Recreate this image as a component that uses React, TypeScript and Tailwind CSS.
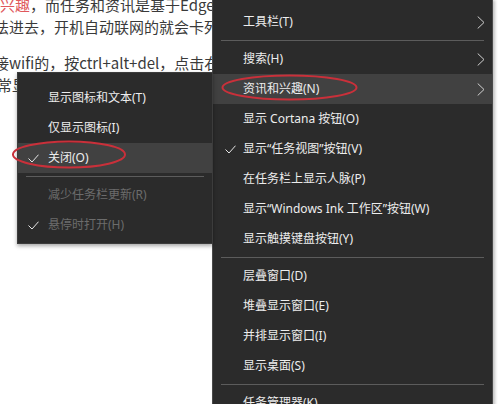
import type { ReactNode } from 'react';

type Item = { label: string; checked?: boolean; disabled?: boolean; active?: boolean; sub?: boolean } | 'sep';

const MAIN: Item[] = [
  { label: '工具栏(T)', sub: true },
  'sep',
  { label: '搜索(H)', sub: true },
  { label: '资讯和兴趣(N)', sub: true, active: true },
  { label: '显示 Cortana 按钮(O)' },
  { label: '显示“任务视图”按钮(V)', checked: true },
  { label: '在任务栏上显示人脉(P)' },
  { label: '显示“Windows Ink 工作区”按钮(W)' },
  { label: '显示触摸键盘按钮(Y)' },
  'sep',
  { label: '层叠窗口(D)' },
  { label: '堆叠显示窗口(E)' },
  { label: '并排显示窗口(I)' },
  { label: '显示桌面(S)' },
  'sep',
  { label: '任务管理器(K)' },
];

const SUB: Item[] = [
  { label: '显示图标和文本(T)' },
  { label: '仅显示图标(I)' },
  { label: '关闭(O)', checked: true, active: true },
  'sep',
  { label: '减少任务栏更新(R)', disabled: true },
  { label: '悬停时打开(H)', checked: true, disabled: true },
];

function Check() {
  return (
    <svg width="11" height="9" viewBox="0 0 11 9" fill="none">
      <polyline points="0.5,4.5 4,8 10.5,0.7" stroke="#e6e6e6" strokeWidth="1" />
    </svg>
  );
}

function Chevron() {
  return (
    <svg width="8" height="13" viewBox="0 0 8 13" fill="none">
      <polyline points="0.7,0.5 7,6.5 0.7,12.5" stroke="#d0d0d0" strokeWidth="1" />
    </svg>
  );
}

function MenuRows({ items, checkPad }: { items: Item[]; checkPad: string }): ReactNode {
  return items.map((it, i) =>
    it === 'sep' ? (
      <div key={i} className="h-[7px] flex items-center mx-[8px]">
        <div className="h-px w-full bg-[#5c5c5c]" />
      </div>
    ) : (
      <div key={i} className={`h-[30px] flex items-center ${it.active ? 'bg-[#414141]' : ''}`}>
        <div className={`w-[30px] shrink-0 flex justify-end ${checkPad}`}>{it.checked && <Check />}</div>
        <div className={`flex-1 whitespace-nowrap ${it.disabled ? 'text-[#6c6c6c]' : 'text-[#ededed]'}`}>{it.label}</div>
        {it.sub && (
          <div className="mr-[7px] flex items-center">
            <Chevron />
          </div>
        )}
      </div>
    )
  );
}

export default function App() {
  return (
    <div className="relative w-[500px] h-[404px] overflow-hidden bg-white font-['Noto_Sans_CJK_SC',sans-serif]">
      {/* article text behind the menus */}
      <div className="-mt-[6px] text-[15px] leading-[22px] text-[#3a3a3a] whitespace-nowrap">
        <div>
          <span className="text-[#e0585c]">兴趣</span>，而任务和资讯是基于Edge浏览器
        </div>
        <div className="-ml-[6px]">法进去，开机自动联网的就会卡死</div>
        <div className="-ml-[6px] mt-[14px]">接wifi的，按ctrl+alt+del，点击右下角</div>
        <div className="-ml-[3px]">常显示任务栏</div>
      </div>

      {/* taskbar context menu */}
      <div className="absolute left-[212px] top-0 w-[281px] h-[430px] bg-[#2b2b2b] border-x border-[#4a4a4a] pt-[7px] text-[12px] font-['Noto_Sans','Noto_Sans_CJK_SC',sans-serif] shadow-[2px_0_3px_rgba(0,0,0,0.25)]">
        <MenuRows items={MAIN} checkPad="pr-[7px]" />
      </div>

      {/* submenu */}
      <div className="absolute left-[17px] top-[72px] w-[196px] h-[172px] bg-[#2b2b2b] border border-[#3c3c3c] pt-[10px] text-[12px] font-['Noto_Sans','Noto_Sans_CJK_SC',sans-serif] shadow-[0_2px_4px_rgba(0,0,0,0.35)]">
        <MenuRows items={SUB} checkPad="pr-[9px]" />
      </div>

      {/* red annotation circles */}
      <svg className="absolute inset-0 pointer-events-none" width="500" height="404" viewBox="0 0 500 404" fill="none">
        <ellipse cx="69" cy="154.5" rx="56" ry="13" stroke="#c9303a" strokeWidth="2" />
        <ellipse cx="289.5" cy="87.5" rx="67" ry="12" stroke="#c9303a" strokeWidth="2" />
      </svg>
    </div>
  );
}
